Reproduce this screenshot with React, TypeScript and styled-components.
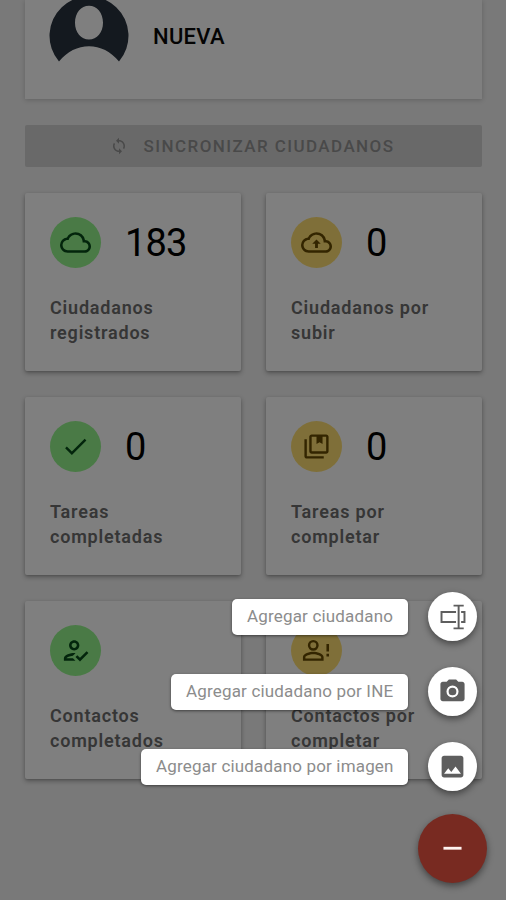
import React from "react";
import styled, { createGlobalStyle } from "styled-components";

const GlobalStyle = createGlobalStyle`
  * { box-sizing: border-box; }
  html, body { margin: 0; height: 900px; overflow: hidden; }
  body { font-family: Roboto, "Liberation Sans", sans-serif; background: #f2f2f2; }
`;

const Screen = styled.div`
  position: relative;
  width: 506px;
  height: 900px;
  overflow: hidden;
  background: #f2f2f2;
`;

const Dashboard = styled.main`
  display: flex;
  flex-direction: column;
  padding: 0 24px 0 25px;
`;

const Profile = styled.section`
  display: flex;
  height: 99px;
  padding-left: 24px;
  gap: 24px;
  background: #fff;
  box-shadow: 0 1px 5px rgba(0, 0, 0, 0.2);
`;

const Avatar = styled.svg`
  width: 80px;
  height: 80px;
  margin-top: -3px;
`;

const ProfileName = styled.h1`
  margin: 24px 0 0;
  font-size: 22px;
  line-height: 26px;
  font-weight: 500;
  letter-spacing: 0.3px;
  color: #080808;
`;

const SyncButton = styled.button`
  display: flex;
  align-items: center;
  justify-content: center;
  gap: 16px;
  height: 42px;
  margin: 26px 0 26px;
  padding: 0 3px 0 0;
  border: 0;
  border-radius: 2px;
  background: #d3d3d3;
  color: #929292;
  font: 500 17px/42px Roboto, sans-serif;
  letter-spacing: 1.42px;
  white-space: nowrap;
`;

const Grid = styled.div`
  display: grid;
  grid-template-columns: 216px 216px;
  grid-auto-rows: 178px;
  gap: 26px 25px;
`;

const Card = styled.article`
  padding: 23px 20px 0 25px;
  background: #fff;
  border-radius: 2px;
  box-shadow: 0 2px 5px rgba(0, 0, 0, 0.32), 0 1px 2px rgba(0, 0, 0, 0.1);
`;

const Stat = styled.div`
  display: flex;
  align-items: center;
  gap: 24px;
  height: 52px;
`;

const Badge = styled.div<{ $tone: "green" | "yellow" }>`
  display: flex;
  align-items: center;
  justify-content: center;
  width: 51px;
  height: 51px;
  border-radius: 50%;
  background: ${(p) => (p.$tone === "green" ? "#94f58c" : "#ffdf73")};
  color: ${(p) => (p.$tone === "green" ? "#064a18" : "#664a00")};
`;

const Count = styled.span`
  padding-top: 1px;
  font-size: 38px;
  line-height: 52px;
  letter-spacing: -0.8px;
  color: #000;
`;

const Caption = styled.p`
  width: 150px;
  margin: 27px 0 0;
  font-size: 18px;
  line-height: 25px;
  font-weight: 600;
  letter-spacing: 0.8px;
  color: #6c6c6c;
`;

const Scrim = styled.div`
  position: absolute;
  inset: 0;
  background: rgba(0, 0, 0, 0.5);
`;

const SpeedDial = styled.nav`
  position: absolute;
  right: 19px;
  bottom: 17px;
  display: flex;
  flex-direction: column;
  align-items: flex-end;
`;

const Action = styled.div`
  display: flex;
  align-items: center;
  gap: 20px;
  height: 49px;
  margin: 0 10px 26px 0;
`;

const ActionLabel = styled.span<{ $width: number }>`
  width: ${(p) => p.$width}px;
  height: 36px;
  padding-left: 15px;
  border-radius: 5px;
  background: #fff;
  box-shadow: 0 1px 3px rgba(0, 0, 0, 0.5);
  color: #8c8c8c;
  font-size: 17px;
  line-height: 35px;
  letter-spacing: 0.17px;
  white-space: nowrap;
`;

const RoundButton = styled.button`
  display: flex;
  align-items: center;
  justify-content: center;
  width: 49px;
  height: 49px;
  padding: 0;
  border: 0;
  border-radius: 50%;
  background: #fff;
  color: #5e5e5e;
  box-shadow: 0 3px 7px rgba(0, 0, 0, 0.45);
`;

const CloseButton = styled(RoundButton)`
  width: 69px;
  height: 69px;
  margin-top: -3px;
  background: #782a21;
  color: #fff3f0;
`;

const Svg = styled.svg<{ $size: number }>`
  flex: none;
  width: ${(p) => p.$size}px;
  height: ${(p) => p.$size}px;
  fill: currentColor;
`;

const cloud =
  "M19.35 10.04A7.49 7.49 0 0 0 12 4C9.11 4 6.6 5.64 5.35 8.04A5.994 5.994 0 0 0 0 14c0 3.31 2.69 6 6 6h13c2.76 0 5-2.24 5-5 0-2.64-2.05-4.78-4.65-4.96zM19 18H6c-2.21 0-4-1.79-4-4s1.79-4 4-4h.71C7.37 7.69 9.48 6 12 6c3.04 0 5.5 2.46 5.5 5.5v.5H19c1.66 0 3 1.34 3 3s-1.34 3-3 3z";

const paths = {
  sync: "M12 4V1L8 5l4 4V6c3.31 0 6 2.69 6 6 0 1.01-.25 1.97-.7 2.8l1.46 1.46A7.93 7.93 0 0 0 20 12c0-4.42-3.58-8-8-8zm0 14c-3.31 0-6-2.69-6-6 0-1.01.25-1.97.7-2.8L5.24 7.74A7.93 7.93 0 0 0 4 12c0 4.42 3.58 8 8 8v3l4-4-4-4v3z",
  cloud,
  upload: cloud + "M8.7 13h2.2v3.3h2.2V13h2.2L12 9.7z",
  check: "M9 16.17 4.83 12l-1.42 1.41L9 19 21 7l-1.41-1.41z",
  bookmarks:
    "M4 6H2v14c0 1.1.9 2 2 2h14v-2H4V6zm16-4H8c-1.1 0-2 .9-2 2v12c0 1.1.9 2 2 2h12c1.1 0 2-.9 2-2V4c0-1.1-.9-2-2-2zm0 14H8V4h4v6l2.5-1.5L17 10V4h3v12z",
  registered:
    "M11 12c2.21 0 4-1.79 4-4s-1.79-4-4-4-4 1.79-4 4 1.79 4 4 4zm0-6c1.1 0 2 .9 2 2s-.9 2-2 2-2-.9-2-2 .9-2 2-2zM5 18c.2-.63 2.57-1.68 4.96-1.94l2.04-2C11.61 14.02 11.32 14 11 14c-2.67 0-8 1.34-8 4v2h9l-2-2H5zm15.6-5.5-5.13 5.17-2.07-2.08L12 17l3.47 3.5L22 13.91z",
  pending:
    "M9.5 3.8a4.2 4.2 0 1 0 0 8.4 4.2 4.2 0 0 0 0-8.4zm0 1.9a2.3 2.3 0 1 1 0 4.6 2.3 2.3 0 0 1 0-4.6zM9.5 13c-2.67 0-8 1.34-8 4v3h16v-3c0-2.66-5.33-4-8-4zm6.1 5.1H3.4V17c0-.64 3.13-2.1 6.1-2.1s6.1 1.46 6.1 2.1v1.1zM19.7 7h2v5.8h-2zM19.7 14.6h2v2h-2z",
  rename:
    "M12.5 .6h9.4v1.8h-3.8v19.2h3.8v1.8h-9.400v-1.800h3.800V2.400h-3.800zM.5 6.500h14.300v1.800H2.300v7.400h12.500v1.800H.5zM19.500 6.500h4v11h-4v-1.800h2.200V8.300h-2.200z",
  camera:
    "M9 2 7.17 4H4c-1.1 0-2 .9-2 2v12c0 1.1.9 2 2 2h16c1.1 0 2-.9 2-2V6c0-1.1-.9-2-2-2h-3.17L15 2H9zm3 15a5 5 0 1 1 0-10 5 5 0 0 1 0 10zm0-1.8a3.2 3.2 0 1 0 0-6.4 3.2 3.2 0 0 0 0 6.4z",
  image:
    "M21 19V5c0-1.1-.9-2-2-2H5c-1.1 0-2 .9-2 2v14c0 1.1.9 2 2 2h14c1.1 0 2-.9 2-2zM8.5 13.5l2.5 3.01L14.5 12l4.5 6H5l3.5-4.5z",
  minus: "M5 10.7h14v2.2H5z",
};

type IconName = keyof typeof paths;

function Icon({ name, size }: { name: IconName; size: number }) {
  return (
    <Svg $size={size} viewBox="0 0 24 24" aria-hidden="true">
      <path d={paths[name]} fillRule={name === "camera" || name === "pending" ? "evenodd" : "nonzero"} />
    </Svg>
  );
}

const stats: { icon: IconName; size: number; tone: "green" | "yellow"; count?: string; caption: string }[] = [
  { icon: "cloud", size: 31, tone: "green", count: "183", caption: "Ciudadanos registrados" },
  { icon: "upload", size: 31, tone: "yellow", count: "0", caption: "Ciudadanos por subir" },
  { icon: "check", size: 29, tone: "green", count: "0", caption: "Tareas completadas" },
  { icon: "bookmarks", size: 29, tone: "yellow", count: "0", caption: "Tareas por completar" },
  { icon: "registered", size: 31, tone: "green", caption: "Contactos completados" },
  { icon: "pending", size: 31, tone: "yellow", caption: "Contactos por completar" },
];

const actions: { icon: IconName; size: number; label: string; width: number }[] = [
  { icon: "rename", size: 26, label: "Agregar ciudadano", width: 176 },
  { icon: "camera", size: 29, label: "Agregar ciudadano por INE", width: 237 },
  { icon: "image", size: 29, label: "Agregar ciudadano por imagen", width: 267 },
];

export default function App() {
  return (
    <Screen>
      <GlobalStyle />
      <Dashboard>
        <Profile>
          <Avatar viewBox="0 0 80 80">
            <path
              fill="#28323e"
              fillRule="evenodd"
              d="M10 64.5A39.5 39.5 0 1 1 70 64.5C54 44 26 44 10 64.5ZM40 8.8C32 8.8 26 16 26 25.8S32 42.5 40 42.5S54 35.5 54 25.8S48 8.8 40 8.8Z"
            />
          </Avatar>
          <ProfileName>NUEVA</ProfileName>
        </Profile>
        <SyncButton>
          <Icon name="sync" size={18} />
          SINCRONIZAR CIUDADANOS
        </SyncButton>
        <Grid>
          {stats.map((s) => (
            <Card key={s.caption}>
              <Stat>
                <Badge $tone={s.tone}>
                  <Icon name={s.icon} size={s.size} />
                </Badge>
                {s.count && <Count>{s.count}</Count>}
              </Stat>
              <Caption>{s.caption}</Caption>
            </Card>
          ))}
        </Grid>
      </Dashboard>
      <Scrim />
      <SpeedDial>
        {actions.map((a) => (
          <Action key={a.label}>
            <ActionLabel $width={a.width}>{a.label}</ActionLabel>
            <RoundButton aria-label={a.label}>
              <Icon name={a.icon} size={a.size} />
            </RoundButton>
          </Action>
        ))}
        <CloseButton aria-label="Cerrar">
          <Icon name="minus" size={31} />
        </CloseButton>
      </SpeedDial>
    </Screen>
  );
}
